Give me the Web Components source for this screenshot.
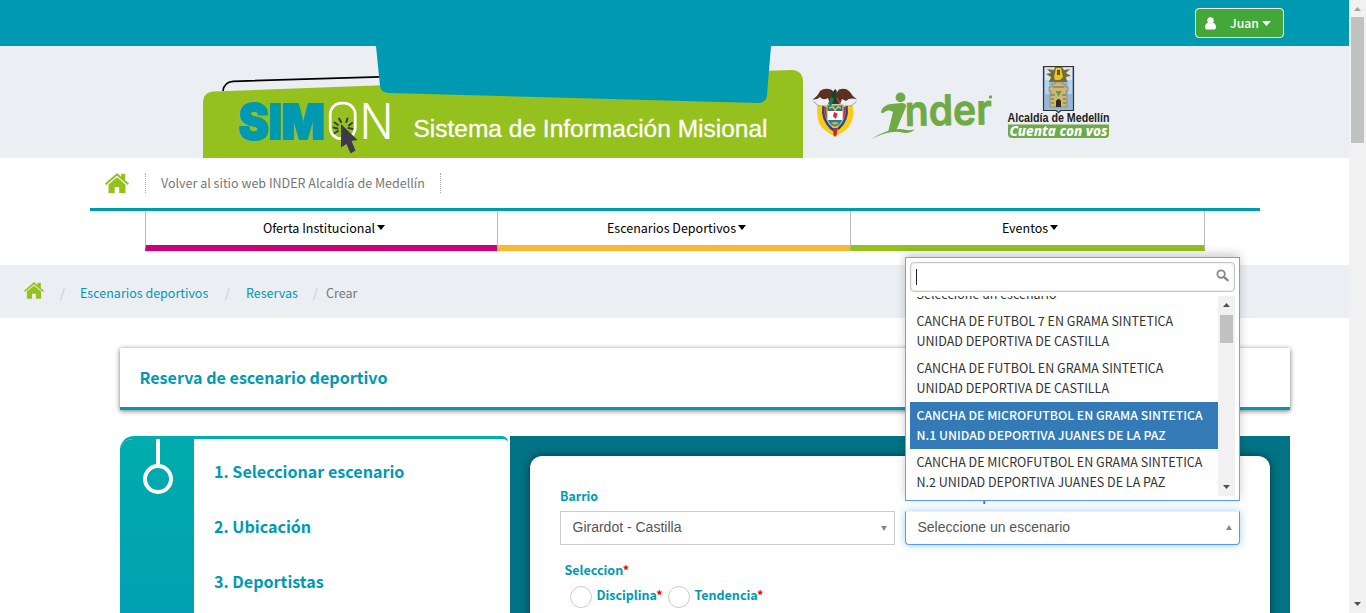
<!DOCTYPE html>
<html lang="es">
<head>
<meta charset="utf-8">
<title>SIMON - Reserva de escenario deportivo</title>
<style>
  html, body { margin: 0; height: 613px; overflow: hidden; background: #fff; }
  body { font: 12.5px/20px "Noto Sans CJK SC", sans-serif; color: #333; }
</style>
</head>
<body>
<app-page>
  <top-bar>Juan</top-bar>
  <site-banner></site-banner>
  <site-nav>
    <nav-item style="--c:#cb0275">Oferta Institucional</nav-item>
    <nav-item style="--c:#fab833">Escenarios Deportivos</nav-item>
    <nav-item style="--c:#95c11f">Eventos</nav-item>
  </site-nav>
  <bread-crumb></bread-crumb>
  <title-card>Reserva de escenario deportivo</title-card>
  <booking-wizard>
    <wizard-steps slot="steps"></wizard-steps>
    <select-field label="Barrio" value="Girardot - Castilla"></select-field>
    <select-field label="Escenario deportivo" value="Seleccione un escenario" open>
      <option-menu slot="menu">
        <menu-option>Seleccione un escenario</menu-option>
        <menu-option>CANCHA DE FUTBOL 7 EN GRAMA SINTETICA UNIDAD DEPORTIVA DE CASTILLA</menu-option>
        <menu-option>CANCHA DE FUTBOL EN GRAMA SINTETICA UNIDAD DEPORTIVA DE CASTILLA</menu-option>
        <menu-option selected>CANCHA DE MICROFUTBOL EN GRAMA SINTETICA N.1 UNIDAD DEPORTIVA JUANES DE LA PAZ</menu-option>
        <menu-option>CANCHA DE MICROFUTBOL EN GRAMA SINTETICA N.2 UNIDAD DEPORTIVA JUANES DE LA PAZ</menu-option>
      </option-menu>
    </select-field>
    <radio-group slot="extra" label="Seleccion">
      <radio-option>Disciplina</radio-option>
      <radio-option>Tendencia</radio-option>
    </radio-group>
  </booking-wizard>
</app-page>
<script>
const define = (name, html) => customElements.define(name, class extends HTMLElement {
  constructor() {
    super();
    const t = document.createElement('template');
    t.innerHTML = html.replace(/\{(\w+)\}/g, (_, k) => this.getAttribute(k) || '');
    this.attachShadow({ mode: 'open' }).append(t.content.cloneNode(true));
  }
});

define('scroll-bar', `<style>
  :host { display: flex; flex-direction: column; align-items: center; background: #f1f1f1; width: 17px; box-sizing: border-box; }
  svg { display: block; flex: none; width: 17px; height: 17px; }
  .up { fill: var(--up, #505050); } .down { fill: #505050; }
  i { display: block; width: 13px; height: var(--len); margin-top: var(--start, 0); background: #c1c1c1; }
  b { flex: 1; }
</style>
<svg class="up" viewBox="0 0 17 17"><path d="M5 11h7L8.500 7z"/></svg><i></i><b></b>
<svg class="down" viewBox="0 0 17 17"><path d="M5 6h7L8.500 10z"/></svg>`);

define('app-page', `<style>
  :host { display: grid; grid-template-columns: 1349px 17px; width: 1366px; height: 613px; overflow: hidden; }
  main { overflow: hidden; height: 613px; }
  scroll-bar { height: 613px; --up: #a3a3a3; --len: 126px; }
</style><main><slot></slot></main><scroll-bar></scroll-bar>`);

define('top-bar', `<style>
  :host { display: flex; justify-content: flex-end; height: 46px; padding: 8px 65px 0 0; box-sizing: border-box; background: #0099b2; }
  .user { display: flex; align-items: center; width: 89px; height: 30px; box-sizing: border-box; border: 1px solid #fff; border-radius: 4px; background: #43a838; color: #fff; padding-left: 9px; font-weight: 500; font-size: 12.2px; }
  .who { width: 11px; height: 13px; margin-right: 14px; }
  .caret { width: 9px; height: 5px; margin-left: 3px; }
</style>
<div class="user">
  <svg class="who" viewBox="0 0 11 13" fill="#fff"><circle cx="5.500" cy="3.400" r="3.200"/><path d="M0 10.500C0 7.500 1.200 6.200 3 5.800q2.500 1.600 5 0c1.800.4 3 1.700 3 4.700 0 1-.8 2-2 2H2c-1.200 0-2-1-2-2z"/></svg>
  <slot></slot>
  <svg class="caret" viewBox="0 0 9 5" fill="#fff"><path d="M0 0h9L4.500 5z"/></svg>
</div>`);

define('site-banner', `<style>
  :host { display: block; height: 112px; background: #ebeef3; }
  svg { display: block; }
</style>
<svg width="1349" height="112" viewBox="0 46 1349 112">
  <path d="M203 158V103Q203 92 214 91.500L791 70Q803 70 803 82V158Z" fill="#95c11f"/>
  <path d="M223 91Q224 82 233 81.300L380 76.800" fill="none" stroke="#000" stroke-width="1.700"/>
  <path d="M376 46L380 86Q381 93 389 93L758 103Q766 103 767 95L771 46Z" fill="#0099b2"/>
  <text x="238.500" y="139" font-family="Inter, sans-serif" font-size="48" font-weight="900" fill="#0099b2" stroke="#0099b2" stroke-width="2" stroke-linejoin="round" textLength="86" lengthAdjust="spacingAndGlyphs">SIM</text>
  <text x="359.500" y="139.300" font-family="Inter, sans-serif" font-size="49.500" font-weight="300" fill="#fff" textLength="34" lengthAdjust="spacingAndGlyphs">N</text>
  <rect x="330.200" y="103.200" width="25" height="35.500" rx="11" fill="none" stroke="#fff" stroke-width="2.700"/>
  <g stroke="#3e3a49" stroke-width="2" stroke-linecap="round" fill="none">
    <path d="M341 122L339 118.500M346.300 122L347.500 118.500M349 125.500L352 123M348.500 128L352.500 129M338 125L334.500 122.500M337.500 128.500L333.500 127.500M338 131L334.500 133"/>
  </g>
  <path d="M341 124L357.500 140L351.500 141L355.500 150.500L350.500 153.500L346.500 144L341 147.500Z" fill="#3e3a49"/>
  <text x="413.500" y="137" font-family="Liberation Sans, sans-serif" font-size="24.800" fill="#fff" stroke="#fff" stroke-width=".3" textLength="354" lengthAdjust="spacingAndGlyphs">Sistema de Información Misional</text>

  <g>
    <path d="M818 105Q816 117 820 125Q825 132 835 136.500Q845 132 850 125Q855 117 852 105Z" fill="#fccb13"/>
    <path d="M819.500 105Q817.500 121 832 132M850.500 105Q852.500 121 838 132" fill="none" stroke="#fccb13" stroke-width="4"/>
    <path d="M823.500 106Q821.500 120 832 129M846.500 106Q848.500 120 838 129" fill="none" stroke="#24489b" stroke-width="2.500"/>
    <path d="M825.500 107Q824.500 118 832 125M844.500 107Q845.500 118 838 125" fill="none" stroke="#d4232e" stroke-width="1.800"/>
    <path d="M827 105H843V120Q842 124 835 127Q828 124 827 120Z" fill="#fff" stroke="#b49036" stroke-width=".8"/>
    <path d="M827.500 105.500H842.500V111H827.500Z" fill="#2b7194"/><path d="M829 108L833 107L835 110L838 107L841 108" stroke="#e9bd2c" fill="none" stroke-width="1.600"/>
    <path d="M828 120H842Q841 124 835 126.500Q829 124 828 120Z" fill="#247fa8"/>
    <path d="M831 123Q835 121 839 123L835 125Z" fill="#d8b934"/>
    <path d="M834 112L837.500 113.500L836 119L833 116.500Z" fill="#e32535"/>
    <path d="M829 128L833 128L834 132Z" fill="#24489b"/>
    <path d="M833 128H838L836.500 135L835 137L833.500 135Z" fill="#bf2c30"/>
    <path d="M812.500 99.500Q818 96 820 91Q825 87 832 90L835 95L839 89.500Q846 87 850 92Q852 96 857 99.500Q850 97 846 101L842 99L840 104H830L828 98Q823 101 820 97Q817 100 812.500 99.500Z" fill="#5b3024"/>
    <path d="M832 93L835 89L837 91L836 97L840 103H830Z" fill="#20402e"/>
    <path d="M831 97L828 104L831 106L834 99Z" fill="#187c51"/><path d="M837 98L840 104" stroke="#c43" stroke-width="1.500"/>
    <path d="M813.500 101.500L820 107M856.500 101.500L850 107" stroke="#9a9da5"/>
  </g>

  <g fill="#6faa46">
    <circle cx="900.500" cy="97.400" r="4.900"/>
    <path d="M881 111.500Q883 105 891 104L902 103Q907.500 103.500 905.500 108L896 131L888 132.500L893 112Q888 109 884 112.500Q881 114 881 111.500Z"/>
    <path d="M870.500 139.500Q888 128 901 129Q908 131 915 129.500Q908 135 900 132Q888 130 870.500 139.500Z"/>
    <text transform="translate(905 126) rotate(-1.200)" font-family="Inter, sans-serif" font-size="42" font-weight="600" stroke="#6faa46" stroke-width=".8" stroke-linejoin="round" textLength="87" lengthAdjust="spacingAndGlyphs">nder</text>
    <circle cx="990.500" cy="97" r="1.700"/>
  </g>

  <g>
    <path d="M1043.500 66.500H1073.500V110.500H1061L1058.500 112.500L1056 110.500H1043.500Z" fill="#91b8df" stroke="#333" stroke-width="1.200"/>
    <path d="M1045 67.500H1072V80H1045Z" fill="#dce4ed"/>
    <path d="M1045 80H1049V94H1045ZM1068 80H1072V94H1068Z" fill="#b9d1ea"/>
    <path d="M1049 82L1051 77L1046 74L1051 73L1047 69L1054 70L1055 67H1062L1064 70L1070 69L1066 73L1071 76L1066 77L1067 82Z" fill="#756b3a"/>
    <path d="M1056 68H1061L1063 77L1060 80H1055L1054 77Z" fill="#e5c626"/>
    <path d="M1057 70H1060V75H1057Z" fill="#6b5420"/>
    <path d="M1052 87V84H1055V82H1062V84H1065V87H1068V91H1066V95H1067V107H1050V95H1051V91H1049V87Z" fill="#c8b87b" stroke="#897a46" stroke-width=".6"/>
    <path d="M1056 107V101Q1058.500 97 1061 101V107Z" fill="#342c1e"/>
    <path d="M1055.500 91L1058.500 96.500L1062 91Z" fill="#6c9a35"/>
    <path d="M1051 99H1054M1063 99H1066M1051 103H1054M1063 103H1066M1053 87H1064M1051 95H1055M1062 95H1066" stroke="#5e5030" stroke-width=".8"/>
    <text x="1007.500" y="122.300" font-family="Liberation Sans, sans-serif" font-weight="700" font-size="12" fill="#231f20" textLength="102" lengthAdjust="spacingAndGlyphs">Alcaldía de Medellín</text>
    <path d="M1008 124.500H1109V134Q1109 138 1105 138H1012Q1008 138 1008 134Z" fill="#6faa46"/>
    <text x="1009.500" y="135.800" font-family="Noto Sans, sans-serif" font-style="italic" font-weight="800" font-size="13.500" fill="#fff" textLength="98" lengthAdjust="spacingAndGlyphs">Cuenta con vos</text>
  </g>
</svg>`);

define('home-icon', `<style>:host { display: block; width: var(--w, 24px); } svg { display: block; width: 100%; }</style>
<svg viewBox="0 0 24 20" fill="#95c11f"><path d="M0 10.500L12 0l4.200 3.700V.8h4v6.400L24 10.500l-1.300 1.400L12 2.700 1.300 11.900z"/><path d="M3.500 11.500L12 4.200l8.500 7.300V20h-6.300v-6H9.700v6H3.500z"/></svg>`);

define('site-nav', `<style>
  :host { display: block; height: 107px; box-sizing: border-box; padding: 0 89px 0 90px; }
  .links { display: flex; height: 50px; align-items: center; border-bottom: 3px solid #0099b2; padding-left: 15px; }
  .back { margin-left: 16px; height: 20px; padding: 0 15px; border: dotted #aaa; border-width: 0 1px; color: #777; width: 264px; white-space: nowrap; font-size: 12.53px; }
  nav { display: grid; grid-template-columns: 352px 353px 355px; margin: 0 55px; height: 40px; }
</style>
<div class="links"><home-icon></home-icon><div class="back">Volver al sitio web INDER Alcaldía de Medellín</div></div>
<nav><slot></slot></nav>`);

define('nav-item', `<style>
  :host { display: flex; justify-content: center; align-items: center; box-sizing: border-box; border-left: 1px solid #bbb; border-bottom: 6px solid var(--c); color: #000; padding: 0 0 1px 5px; }
  :host(:last-child) { border-right: 1px solid #bbb; }
  svg { margin-left: 2px; width: 8px; height: 5px; }
</style><slot></slot><svg viewBox="0 0 8 5"><path d="M0 0h8L4 5z"/></svg>`);

define('bread-crumb', `<style>
  :host { display: flex; align-items: center; height: 53px; box-sizing: border-box; background: #ebeef3; padding: 3px 0 0 24px; color: #777; }
  home-icon { --w: 20px; margin: -5px 16px 0 0; }
  span { color: #0099b2; } i { font-style: normal; color: #ccc; width: 5px; }
</style>
<home-icon></home-icon><i>/</i><span style="margin:0 16px 0 15px;width:129px">Escenarios deportivos</span><i>/</i><span style="margin:0 16px 0 16px;width:51px">Reservas</span><i>/</i><b style="font-weight:400;margin-left:8px">Crear</b>`);

define('title-card', `<style>
  :host { display: flex; align-items: center; width: 1170px; height: 62px; box-sizing: border-box; margin: 30px 0 0 120px; padding: 0 0 2px 19.500px; border-bottom: 3px solid #0099b2; box-shadow: 0 1px 5px rgba(0,0,0,.55); color: #0099b2; font-weight: 700; font-size: 16.09px; }
</style><slot></slot>`);

define('booking-wizard', `<style>
  :host { display: grid; grid-template-columns: 390px 780px; width: 1170px; height: 600px; margin: 26px 0 0 120px; }
  .form { background: #007384; padding: 20px; }
  .card { background: #fff; border-radius: 12px; height: 600px; box-sizing: border-box; padding: 30px; box-shadow: 0 0 8px rgba(0,0,0,.5); }
  .row { display: grid; grid-template-columns: 335px 335px; gap: 10px; }
</style>
<slot name="steps"></slot>
<div class="form"><div class="card"><div class="row"><slot></slot></div><slot name="extra"></slot></div></div>`);

define('wizard-steps', `<style>
  :host { display: grid; grid-template-columns: 74px 1fr; width: 388px; box-sizing: border-box; border-radius: 14px 6px 0 0; border-top: 3px solid #00acad; overflow: hidden; }
  .rail { background: linear-gradient(#00acad, #00a0b2 175px, #0099b2 300px); display: flex; flex-direction: column; align-items: center; padding-left: 2px; }
  .rail i { width: 4px; height: 25px; background: #fff; }
  .rail b { width: 22px; height: 22px; border: 4px solid #fff; border-radius: 50%; }
  ol { list-style: none; margin: 0; padding: 5px 0 0 20px; color: #0099b2; font-weight: 700; font-size: 16.09px; }
  li { height: 55px; line-height: 55px; }
</style>
<div class="rail"><i></i><b></b></div>
<ol><li>1. Seleccionar escenario</li><li>2. Ubicación</li><li>3. Deportistas</li></ol>`);

define('select-field', `<style>
  :host { display: block; position: relative; }
  label { display: block; height: 25px; color: #0099b2; font-weight: 700; font-size: 12.4px; }
  .box { display: flex; align-items: center; justify-content: space-between; height: 34px; box-sizing: border-box; border: 1px solid #ccc; padding: 0 7px 2px 11.500px; background: #fff; color: #555; font: 14px "Liberation Sans", sans-serif; }
  svg { width: 6px; height: 5px; margin-top: 2px; fill: #888; }
  :host([open]) .box { border-color: #5897fb; border-top-color: #eee; border-radius: 0 0 4px 4px; box-shadow: 0 0 8px rgba(102,175,233,.6); }
  :host([open]) svg { transform: scaleY(-1); margin-top: 0; }
  ::slotted(*) { position: absolute; left: 0; bottom: 44px; }
</style>
<label>{label}</label><div class="box"><span>{value}</span><svg viewBox="0 0 6 5"><path d="M0 0h6L3 5z"/></svg></div>
<slot name="menu"></slot>`);

define('option-menu', `<style>
  :host { display: block; width: 335px; height: 244px; box-sizing: border-box; border: 1px solid #66aae4; border-bottom-color: #5897fb; background: #fff; padding: 4px; box-shadow: 0 -3px 9px rgba(0,0,0,.2); }
  .search { display: flex; align-items: center; justify-content: space-between; height: 30px; box-sizing: border-box; border: 1px solid #c4c4c4; border-radius: 4px; padding: 0 5px; box-shadow: inset 0 0 2px #ccc; }
  .search i { width: 1px; height: 16px; background: #222; }
  .search svg { width: 13px; height: 13px; margin-top: -4px; }
  .list { display: grid; grid-template-columns: 308px 17px; height: 200px; margin-top: 4px; overflow: hidden; }
  .items { display: flex; flex-direction: column; justify-content: flex-end; height: 200px; overflow: hidden; }
  scroll-bar { height: 200px; --start: 2px; --len: 28px; }
</style>
<div class="search"><i></i><svg viewBox="0 0 14 14" fill="none" stroke="#888"><circle cx="5.500" cy="5.500" r="4" stroke-width="2"/><path d="M8.700 8.700L12.500 12" stroke-width="2.600" stroke-linecap="round"/></svg></div>
<div class="list"><div class="items"><slot></slot></div><scroll-bar></scroll-bar></div>`);

define('menu-option', `<style>
  :host { display: block; flex: none; padding: 3px 7px 4px 6.500px; }
  :host([selected]) { background: #337ab7; color: #fff; font-weight: 500; font-size: 12.27px; }
</style><slot></slot>`);

define('radio-group', `<style>
  :host { display: block; padding: 15px 0 0 4.500px; color: #0099b2; font-weight: 700; font-size: 12.5px; }
  .opts { display: flex; padding-left: 5.500px; margin-top: 5px; }
  em { color: #f00; font-style: normal; }
</style><div>{label}<em>*</em></div><div class="opts"><slot></slot></div>`);

define('radio-option', `<style>
  :host { display: flex; width: 98px; height: 25px; }
  i { width: 20px; height: 20px; border: 1px solid #ccc; border-radius: 50%; margin: 1px 4.500px 0 0; }
  em { color: #f00; font-style: normal; }
</style><i></i><span><slot></slot><em>*</em></span>`);
</script>
</body>
</html>
